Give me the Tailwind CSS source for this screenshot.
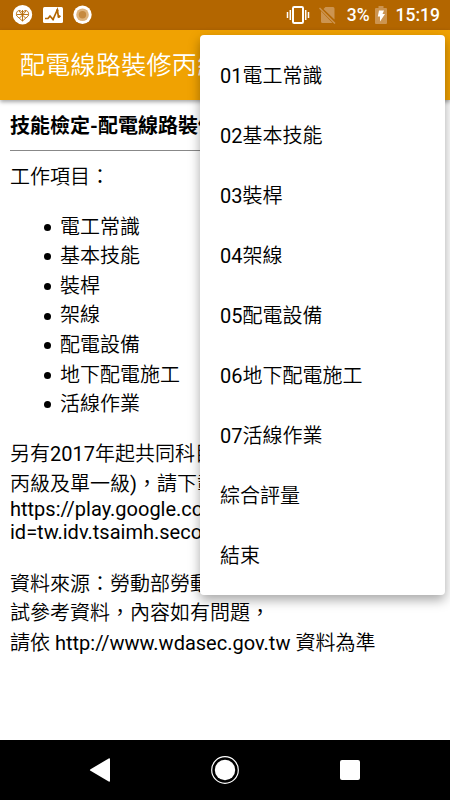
<!DOCTYPE html>
<html lang="zh-Hant">
<head>
    <meta charset="UTF-8"/>
    <meta name="viewport" content="width=device-width, initial-scale=1.0"/>
    <title>配電線路裝修丙級</title>
    <script src="https://cdn.jsdelivr.net/npm/@tailwindcss/browser@4"></script>
</head>
<body class="relative flex h-[800px] w-[450px] flex-col overflow-hidden bg-white font-['Roboto','Noto_Sans_CJK_TC_DemiLight','Noto_Sans_CJK_TC_Light','Noto_Sans_CJK_TC',sans-serif] text-[20px] text-black">

<!-- Status bar -->
<div class="flex h-[30px] shrink-0 items-center justify-between bg-[#b36600] pl-[13px] pr-[10px] text-white">
    <div class="flex items-center gap-[10px]">
        <svg class="size-5" viewBox="0 0 20 20" fill="none">
            <circle cx="9.5" cy="9.7" r="9.7" fill="#fff"/>
            <path d="M9.5 16 3.8 11C2.5 8 4.5 5 7 5.5L9.5 7.5 12 5.5C14.5 5 16.5 8 15.2 11ZM9.5 5v11M4 9.5h11M6 6l3.5 4L13 6M6.5 13l3-3 3 3" stroke="#b36600" stroke-width=".9"/>
        </svg>
        <svg class="h-4 w-5" viewBox="0 0 20 16" fill="none">
            <rect width="20" height="16" rx="1.5" fill="#fff"/>
            <path d="M2 11.5h3l2-2.5 3 3.5L14.3 3 15.5 10 17.5 9" stroke="#b36600" stroke-width="1.7"/>
            <circle cx="14.3" cy="3.5" r="1.2" fill="#b36600"/>
            <circle cx="10" cy="12" r="1.2" fill="#b36600"/>
            <circle cx="16" cy="9.5" r="1.2" fill="#b36600"/>
        </svg>
        <svg class="size-5" viewBox="0 0 20 20">
            <circle cx="9.5" cy="9.8" r="9.2" fill="#fff"/>
            <circle cx="9.5" cy="9.8" r="6.3" fill="#dfb47c"/>
            <circle cx="9.5" cy="9.8" r="3.7" fill="#c68a3f"/>
        </svg>
    </div>
    <div class="flex items-center">
        <svg class="mr-[9px] h-[18px] w-6" viewBox="0 0 24 18" fill="none" stroke="#fff">
            <rect x="7" y="1" width="10" height="16" rx="1.2" stroke-width="2"/>
            <path d="M1.5 6v6M4.3 4v10M19.7 4v10M22.5 6v6" stroke-width="1.5"/>
        </svg>
        <svg class="mr-[11px] h-[18px] w-[17px]" viewBox="0 0 17 18">
            <path d="M4.5 3 6.5 1h7.5a1.5 1.5 0 0 1 1.5 1.5v11zM2 5 13.5 17H3.5a1.5 1.5 0 0 1-1.5-1.5z" fill="#cc9450"/>
            <path d="M.5 2 16 17.5" stroke="#cc9450" stroke-width="1.5"/>
        </svg>
        <span class="text-[17.5px] font-medium">3%</span>
        <svg class="ml-[5px] mr-[9px] h-[18px] w-3" viewBox="0 0 12 18">
            <path d="M1 2h2.5V0h5v2H11a1 1 0 0 1 1 1v14a1 1 0 0 1-1 1H1a1 1 0 0 1-1-1V3a1 1 0 0 1 1-1z" fill="#cc9450"/>
            <path d="M4 4.5h5L7.5 8H10l-5 7.5V10.5H2.8z" fill="#fff"/>
        </svg>
        <span class="text-[17.5px] font-medium">15:19</span>
    </div>
</div>

<!-- Title bar -->
<header class="z-10 flex h-[70px] shrink-0 items-center bg-[#f0a202] pl-5 shadow-[0_2px_4px_rgba(0,0,0,0.35)]">
    <h1 class="whitespace-nowrap pt-px text-[25px] leading-[38px] tracking-[0.3px] text-white">配電線路裝修丙級</h1>
</header>

<!-- Page content -->
<main class="grow whitespace-nowrap px-[10px] pt-3">
    <h2 class="font-['Roboto','Noto_Sans_CJK_TC',sans-serif] font-bold leading-[29.6px]">技能檢定-配電線路裝修</h2>
    <hr class="mt-2 border-t border-[#888]"/>
    <p class="mt-3 leading-[29.6px]">工作項目：</p>
    <ul class="mb-5 mt-[20.4px] pl-[34px] leading-[29.6px]">
        <li class="flex items-center gap-[9px]"><span class="size-[7px] rounded-full bg-black"></span>電工常識</li>
        <li class="flex items-center gap-[9px]"><span class="size-[7px] rounded-full bg-black"></span>基本技能</li>
        <li class="flex items-center gap-[9px]"><span class="size-[7px] rounded-full bg-black"></span>裝桿</li>
        <li class="flex items-center gap-[9px]"><span class="size-[7px] rounded-full bg-black"></span>架線</li>
        <li class="flex items-center gap-[9px]"><span class="size-[7px] rounded-full bg-black"></span>配電設備</li>
        <li class="flex items-center gap-[9px]"><span class="size-[7px] rounded-full bg-black"></span>地下配電施工</li>
        <li class="flex items-center gap-[9px]"><span class="size-[7px] rounded-full bg-black"></span>活線作業</li>
    </ul>
    <div class="pt-[0.6px] leading-[29.6px]">
        <p>另有2017年起共同科目</p>
        <p>丙級及單一級)，請下載</p>
        <p class="-mt-[2px] leading-[23.5px]">https://play.google.com/</p>
        <p class="leading-[23.5px]">id=tw.idv.tsaimh.second</p>
        <p class="mt-[25px]">資料來源：勞動部勞動力</p>
        <p>試參考資料，內容如有問題，</p>
        <p>請依 http://www.wdasec.gov.tw 資料為準</p>
    </div>
</main>

<!-- Navigation bar -->
<nav class="flex h-[60px] shrink-0 items-center justify-between bg-black pl-[89px] pr-[90px]">
    <svg class="h-6 w-[21px]" viewBox="0 0 21 24" fill="#fff"><path d="M1.5 11.2 19.7.5Q21 0 21 1.2v21.6q0 1.2-1.3.7L1.5 12.8q-1.2-.8 0-1.6z"/></svg>
    <svg class="size-7" viewBox="0 0 28 28">
        <circle cx="14" cy="14" r="13.3" fill="none" stroke="#fff" stroke-width="1.2"/>
        <circle cx="14" cy="14" r="10.2" fill="#fff"/>
    </svg>
    <div class="size-5 rounded-[2px] bg-white"></div>
</nav>

<!-- Overflow menu -->
<ul class="absolute left-[200px] top-[35px] z-20 h-[560px] w-[245px] rounded-[4px] bg-white py-[11px] shadow-[0_5px_12px_rgba(0,0,0,0.35)]">
    <li class="flex h-[60px] items-center px-5">01電工常識</li>
    <li class="flex h-[60px] items-center px-5">02基本技能</li>
    <li class="flex h-[60px] items-center px-5">03裝桿</li>
    <li class="flex h-[60px] items-center px-5">04架線</li>
    <li class="flex h-[60px] items-center px-5">05配電設備</li>
    <li class="flex h-[60px] items-center px-5">06地下配電施工</li>
    <li class="flex h-[60px] items-center px-5">07活線作業</li>
    <li class="flex h-[60px] items-center px-5">綜合評量</li>
    <li class="flex h-[60px] items-center px-5">結束</li>
</ul>
</body>
</html>
